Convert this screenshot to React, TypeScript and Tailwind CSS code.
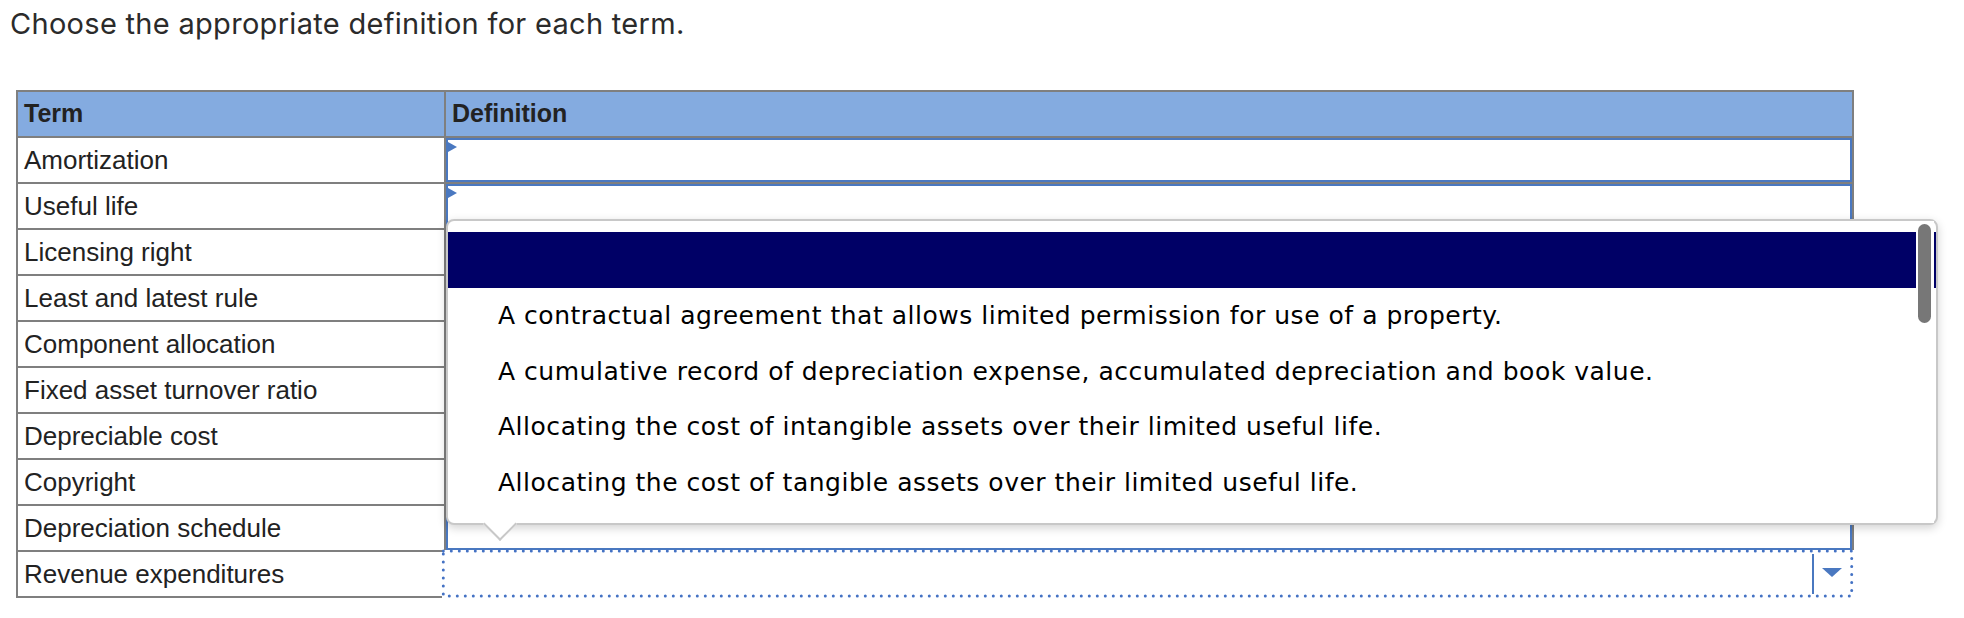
const terms = [
  'Amortization',
  'Useful life',
  'Licensing right',
  'Least and latest rule',
  'Component allocation',
  'Fixed asset turnover ratio',
  'Depreciable cost',
  'Copyright',
  'Depreciation schedule',
  'Revenue expenditures',
]

const options = [
  'A contractual agreement that allows limited permission for use of a property.',
  'A cumulative record of depreciation expense, accumulated depreciation and book value.',
  'Allocating the cost of intangible assets over their limited useful life.',
  'Allocating the cost of tangible assets over their limited useful life.',
]

const arial = { fontFamily: '"Liberation Sans", Arial, sans-serif' }
const verdana = { fontFamily: '"DejaVu Sans", Verdana, sans-serif' }

function DefinitionBox() {
  return (
    <div className="relative h-full w-full border-2 border-[#4a78c0]">
      <span className="absolute left-0 top-[2px] h-0 w-0 border-y-[5px] border-l-[9px] border-y-transparent border-l-[#4a78c0]" />
    </div>
  )
}

function FocusedSelect() {
  return (
    <div className="relative h-full w-full">
      {/* focus ring drawn over the cell borders */}
      <svg
        className="pointer-events-none absolute -left-[4px] -top-[2px] overflow-visible"
        width={1412}
        height={48}
      >
        <rect x={0} y={0} width={1412} height={48} fill="#fff" />
        <rect
          x={1.3}
          y={0.9}
          width={1408.4}
          height={45.2}
          fill="none"
          stroke="#4472c4"
          strokeWidth={3}
          strokeDasharray="0 8"
          strokeLinecap="round"
        />
      </svg>
      <div className="relative flex h-full justify-end py-[2px] pr-[2px]">
        <div className="flex w-[38px] items-center justify-center border-l-2 border-[#4a78c0] pb-[3px]">
          <span className="h-0 w-0 border-x-[10px] border-t-[9px] border-x-transparent border-t-[#4a78c0]" />
        </div>
      </div>
    </div>
  )
}

function OptionsPopup() {
  return (
    <div className="absolute left-[428px] top-[127px] h-[306px] w-[1492px] rounded-[8px] border-2 border-[#c8c8c8] bg-white pt-[11px] shadow-[0_3px_10px_rgba(0,0,0,0.18)]">
      <div className="h-[56px] bg-[#000066]" />
      {options.map((o) => (
        <div
          key={o}
          className="h-[55.6px] pl-[50px] text-[25px] leading-[55.6px] tracking-[0.52px] text-black"
          style={verdana}
        >
          {o}
        </div>
      ))}

      {/* scrollbar */}
      <div className="absolute bottom-0 right-[2px] top-0 w-[18px] bg-white pl-[2px] pt-[3px]">
        <div className="h-[99px] w-[13px] rounded-full bg-[#777]" />
      </div>

      {/* pointer */}
      <span className="absolute left-[40px] top-[291px] h-[24px] w-[24px] rotate-45 border-b-2 border-r-2 border-[#c8c8c8] bg-white" />
    </div>
  )
}

export default function App() {
  return (
    <div className="h-[618px] w-[1964px] overflow-hidden bg-white">
      <p
        className="pl-[10px] pt-[6px] text-[29px] leading-[35px] tracking-[0.3px] text-[#2b2b2b]"
        style={{ fontFamily: 'Inter, "Liberation Sans", sans-serif' }}
      >
        Choose the appropriate definition for each term.
      </p>

      <div className="relative ml-[16px] mt-[49px] w-[1838px] border-2 border-[#7f7f7f] text-[#222]" style={arial}>
        {/* header */}
        <div className="flex h-[46px] border-b-2 border-[#7f7f7f] bg-[#84abe0] text-[25px] font-bold">
          <div className="flex w-[428px] items-center border-r-2 border-[#7f7f7f] pl-[6px]">Term</div>
          <div className="flex flex-1 items-center pl-[6px]">Definition</div>
        </div>

        {terms.map((t, i) => {
          const last = i === terms.length - 1
          return (
            <div
              key={t}
              className={
                last
                  ? 'flex h-[44px] text-[26px]'
                  : 'flex h-[46px] border-b-2 border-[#7f7f7f] text-[26px]'
              }
            >
              <div className="flex w-[428px] items-center border-r-2 border-[#7f7f7f] pl-[6px]">{t}</div>
              <div className="flex-1">{last ? <FocusedSelect /> : <DefinitionBox />}</div>
            </div>
          )
        })}

        <OptionsPopup />
      </div>
    </div>
  )
}
